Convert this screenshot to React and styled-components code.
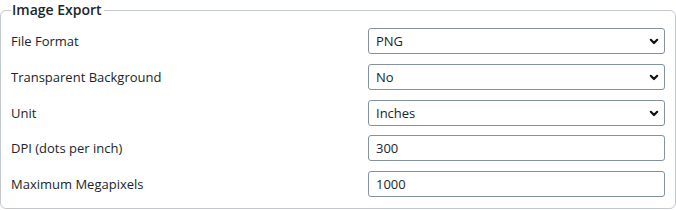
import React from "react";
import styled, { createGlobalStyle } from "styled-components";

const Global = createGlobalStyle`
  html, body { margin: 0; padding: 0; background: #ffffff; }
  body { font-family: "Segoe UI", "Open Sans", "Noto Sans", sans-serif; color: #212529; }
`;

const Fieldset = styled.fieldset`
  box-sizing: border-box;
  width: 676px;
  margin: 0;
  padding: 8px 10px 11px 10px;
  border: 1px solid #c4c9ce;
  border-radius: 6px;
`;

const Legend = styled.legend`
  padding: 0 2px 0 1px;
  margin-left: 0;
  font-size: 14px;
  font-weight: 600;
  line-height: 20px;
  color: #212529;
`;

const Form = styled.div`
  display: grid;
  grid-template-columns: 357px 1fr;
  row-gap: 9.75px;
  align-items: center;
`;

const Label = styled.label`
  font-size: 13px;
  line-height: 18px;
  color: #212529;
`;

const fieldCss = `
  box-sizing: border-box;
  width: 100%;
  height: 26px;
  margin: 0;
  padding: 0 8px 0 7px;
  border: 1px solid #8391a0;
  border-radius: 3px;
  background: #ffffff;
  font-family: "Segoe UI", "Open Sans", "Noto Sans", sans-serif;
  font-size: 13px;
  color: #212529;
  outline: none;
`;

const SelectWrap = styled.div`
  position: relative;
`;

const Select = styled.select`
  ${fieldCss}
  appearance: none;
  -webkit-appearance: none;
`;

const Chevron = styled.svg`
  position: absolute;
  right: 6px;
  top: 10px;
  width: 10px;
  height: 7px;
  pointer-events: none;
`;

const Input = styled.input`
  ${fieldCss}
`;

const rows = [
  { label: "File Format", type: "select", value: "PNG", options: ["PNG", "JPEG", "SVG"] },
  { label: "Transparent Background", type: "select", value: "No", options: ["No", "Yes"] },
  { label: "Unit", type: "select", value: "Inches", options: ["Inches", "Centimeters", "Pixels"] },
  { label: "DPI (dots per inch)", type: "input", value: "300" },
  { label: "Maximum Megapixels", type: "input", value: "1000" },
];

export default function App() {
  return (
    <>
      <Global />
      <Fieldset>
        <Legend>Image Export</Legend>
        <Form>
          {rows.map((r) => (
            <React.Fragment key={r.label}>
              <Label>{r.label}</Label>
              {r.type === "select" ? (
                <SelectWrap>
                  <Select defaultValue={r.value}>
                    {r.options.map((o) => (
                      <option key={o}>{o}</option>
                    ))}
                  </Select>
                  <Chevron viewBox="0 0 10 7">
                    <path d="M1.8 1.8 L5 5 L8.2 1.8" fill="none" stroke="#111" strokeWidth="2.2" strokeLinecap="round" strokeLinejoin="round" />
                  </Chevron>
                </SelectWrap>
              ) : (
                <Input defaultValue={r.value} />
              )}
            </React.Fragment>
          ))}
        </Form>
      </Fieldset>
    </>
  );
}
